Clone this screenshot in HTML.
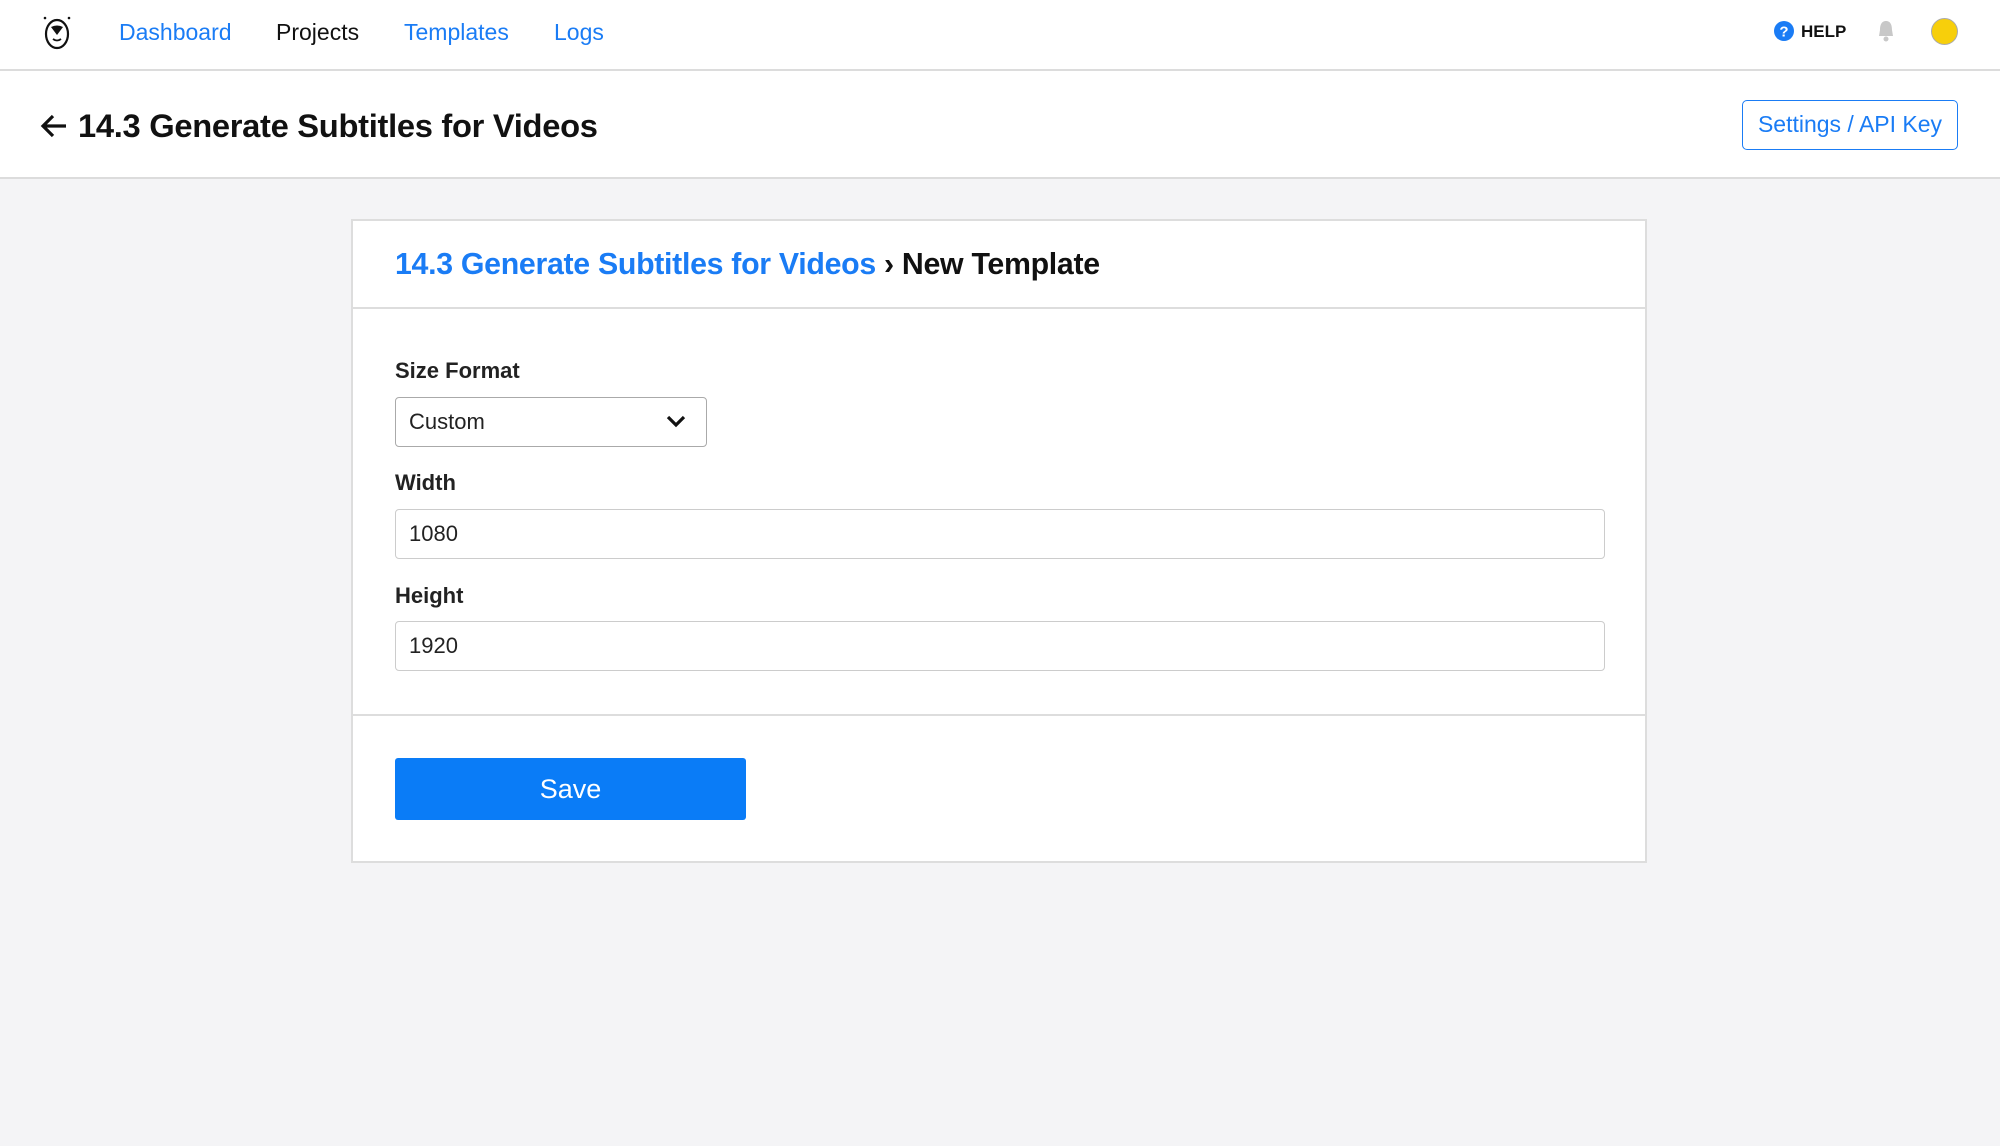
<!DOCTYPE html>
<html><head><meta charset="utf-8"><style>
*{box-sizing:border-box;margin:0;padding:0}
body{width:2000px;height:1146px;background:#f4f4f6;font-family:"Liberation Sans",sans-serif;position:relative;overflow:hidden;color:#111}
.nav{position:absolute;left:0;top:0;width:2000px;height:71px;background:#fff;border-bottom:2px solid #dcdcdc}
.nav a{position:absolute;top:19px;font-size:23px;color:#1a7cf5;text-decoration:none}
.hdr{position:absolute;left:0;top:71px;width:2000px;height:108px;background:#fff;border-bottom:2px solid #dcdcdc}
.title{position:absolute;left:78px;top:36px;font-size:32.7px;font-weight:700;letter-spacing:-0.3px}
.btn{position:absolute;left:1742px;top:29px;width:216px;height:50px;border:1.5px solid #1a7cf5;border-radius:5px;color:#1a7cf5;font-size:23px;text-align:center;line-height:47px}
.card{position:absolute;left:351px;top:219px;width:1296px;height:644px;background:#fff;border:2px solid #ddd}
.ch{height:88px;border-bottom:2px solid #ddd;padding:27px 0 0 42px;font-size:30.3px;font-weight:700;letter-spacing:-0.3px}
.lbl{position:absolute;left:42px;font-size:22px;font-weight:700;color:#222}
.inp{position:absolute;left:42px;height:50px;border:1.5px solid #ccc;border-radius:4px;font-size:22px;padding:0 13px;line-height:47px;color:#222}
.save{position:absolute;left:42px;top:537px;width:351px;height:62px;background:#0a7cf7;border-radius:3px;color:#fff;font-size:27px;text-align:center;line-height:62px}
</style></head><body>
<div class="nav">
<svg style="position:absolute;left:42px;top:14px" width="30" height="36" viewBox="0 0 30 36"><ellipse cx="15" cy="20" rx="11" ry="14" fill="none" stroke="#111" stroke-width="2.2"/><path d="M9 13 Q15 10 21 13 L15 21 Z" fill="#111"/><path d="M11 25 Q15 28 19 25" stroke="#111" stroke-width="1.8" fill="none"/><circle cx="3" cy="4" r="1.3" fill="#111"/><circle cx="27" cy="4" r="1.3" fill="#111"/></svg>
<a style="left:119px">Dashboard</a>
<a style="left:276px;color:#111">Projects</a>
<a style="left:404px">Templates</a>
<a style="left:554px">Logs</a>
<svg style="position:absolute;left:1774px;top:21px" width="20" height="20" viewBox="0 0 20 20"><circle cx="10" cy="10" r="10" fill="#1a7cf5"/><text x="10" y="15.5" font-size="15" font-weight="700" fill="#fff" text-anchor="middle" font-family="Liberation Sans">?</text></svg>
<div style="position:absolute;left:1801px;top:22px;font-size:17px;font-weight:700">HELP</div>
<svg style="position:absolute;left:1876px;top:19px" width="20" height="24" viewBox="0 0 20 24"><path d="M10 2 C5 2 4 7 4 11 L3 17 L17 17 L16 11 C16 7 15 2 10 2Z" fill="#c8c8c8"/><circle cx="10" cy="20" r="2.5" fill="#c8c8c8"/></svg>
<div style="position:absolute;left:1931px;top:18px;width:27px;height:27px;border-radius:50%;background:#f7cf0b;border:1px solid #aaa"></div>
</div>
<div class="hdr">
<svg style="position:absolute;left:40px;top:42px" width="28" height="26" viewBox="0 0 28 26"><path d="M26 13 H4 M13 3 L3 13 L13 23" stroke="#111" stroke-width="3.2" fill="none"/></svg>
<div class="title">14.3 Generate Subtitles for Videos</div>
<div class="btn">Settings / API Key</div>
</div>
<div class="card">
<div class="ch"><span style="color:#1a7cf5">14.3 Generate Subtitles for Videos</span> › New Template</div>
<div class="lbl" style="top:137px">Size Format</div>
<div class="inp" style="top:176px;width:312px;border-color:#aaa">Custom
<svg style="position:absolute;right:20px;top:17px" width="20" height="14" viewBox="0 0 20 14"><path d="M2 2 L10 10 L18 2" stroke="#111" stroke-width="3.2" fill="none"/></svg></div>
<div class="lbl" style="top:249px">Width</div>
<div class="inp" style="top:288px;width:1210px">1080</div>
<div class="lbl" style="top:362px">Height</div>
<div class="inp" style="top:400px;width:1210px">1920</div>
<div style="position:absolute;left:0;top:493px;width:1292px;border-top:2px solid #ddd"></div>
<div class="save">Save</div>
</div>
</body></html>
